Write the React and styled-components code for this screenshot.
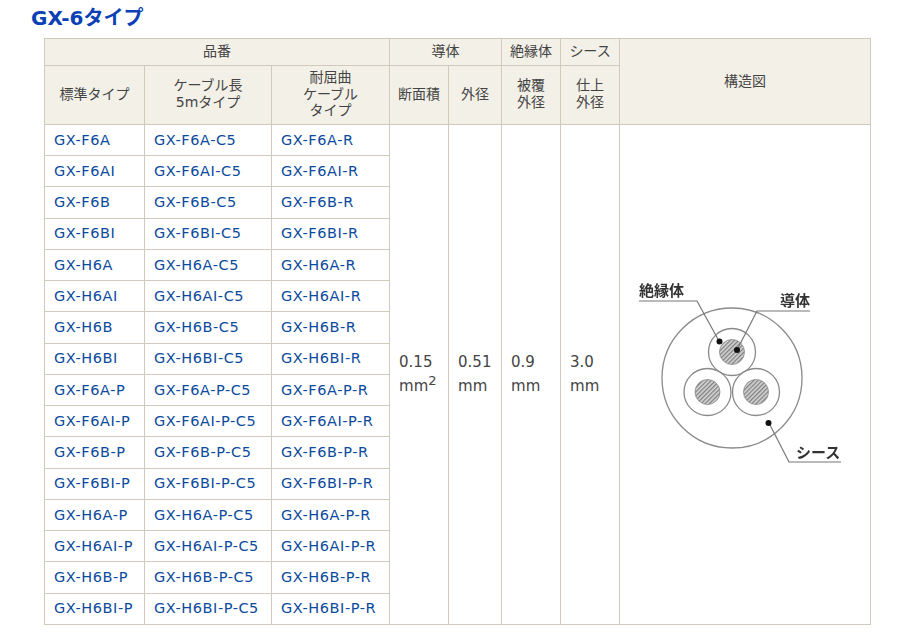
import React from "react";
import styled, { createGlobalStyle } from "styled-components";

const GlobalStyle = createGlobalStyle`
  html, body {
    margin: 0;
    padding: 0;
    background: #fff;
  }
`;

const FONT = `"DejaVu Sans", "Noto Sans CJK JP", sans-serif`;

const Page = styled.div`
  width: 900px;
  height: 638px;
  overflow: hidden;
  font-family: ${FONT};
  color: #444;
`;

const Title = styled.h2`
  margin: 0;
  padding: 5px 0 0 31px;
  height: 37.9px;
  box-sizing: border-box;
  font-size: 20px;
  line-height: 27px;
  font-weight: 700;
  color: #0a3fb5;
`;

const SpecTable = styled.table`
  margin-left: 44px;
  width: 826px;
  table-layout: fixed;
  border-collapse: collapse;
  font-size: 15px;
  border: 1px solid #cfcabb;
`;

const Head = styled.th`
  padding: 0 0 2px;
  border: 1px solid #cfcabb;
  background: #f3f0e8;
  font-weight: 400;
  font-size: 14px;
  line-height: 16.5px;
  color: #444;
  text-align: center;
  vertical-align: middle;
  height: ${(p) => p.$h || 24}px;
`;

const DiagramHead = styled(Head)`
  vertical-align: top;
  padding: 34px 0 0;
`;

const Cell = styled.td`
  padding: 0 0 1px 9px;
  border: 1px solid #cfcabb;
  height: 29.25px;
  line-height: 20px;
  letter-spacing: 0.55px;
  font-size: 14.5px;
  color: #0b4a9c;
  white-space: nowrap;
`;

const SpecCell = styled.td`
  padding: 0 0 0 9px;
  border: 1px solid #cfcabb;
  line-height: 24.5px;
  font-size: 15px;
  color: #444;
  vertical-align: middle;
`;

const DiagramCell = styled.td`
  padding: 0;
  border: 1px solid #cfcabb;
  text-align: center;
  vertical-align: middle;
`;

const Sup = styled.sup`
  font-size: 13px;
  line-height: 1;
`;

const Drawing = styled.svg`
  display: block;
  filter: blur(0.45px);
`;

const names = [
  "GX-F6A", "GX-F6AI", "GX-F6B", "GX-F6BI",
  "GX-H6A", "GX-H6AI", "GX-H6B", "GX-H6BI",
  "GX-F6A-P", "GX-F6AI-P", "GX-F6B-P", "GX-F6BI-P",
  "GX-H6A-P", "GX-H6AI-P", "GX-H6B-P", "GX-H6BI-P",
];

const Wire = ({ x, y }) => (
  <g>
    <circle cx={x} cy={y} r="23.5" fill="#fff" stroke="#8a8a8a" strokeWidth="1.3" />
    <circle cx={x} cy={y} r="12.5" fill="url(#hatch)" stroke="#8a8a8a" strokeWidth="0.8" />
  </g>
);

const CableDiagram = () => (
  <Drawing width="251" height="220" viewBox="0 0 251 220">
    <defs>
      <pattern id="hatch" width="3" height="3" patternUnits="userSpaceOnUse" patternTransform="rotate(-45)">
        <rect width="3" height="3" fill="#d6d6d6" />
        <rect width="3" height="1.3" fill="#7f7f7f" />
      </pattern>
    </defs>
    <g transform="translate(0,-264)" fill="none">
      <circle cx="112" cy="378" r="70" stroke="#8a8a8a" strokeWidth="1.3" />
      <Wire x={112} y={352} />
      <Wire x={87.5} y={392} />
      <Wire x={136} y={392} />
      <path d="M19 301H77L99 341" stroke="#777" strokeWidth="1.2" />
      <path d="M190 311H137L117 350" stroke="#777" strokeWidth="1.2" />
      <path d="M149 423L169 462H221" stroke="#777" strokeWidth="1.2" />
      <circle cx="99.5" cy="341.5" r="3" fill="#111" />
      <circle cx="117" cy="350" r="3" fill="#111" />
      <circle cx="148.5" cy="423" r="3" fill="#111" />
      <g fill="#333" fontSize="15" fontWeight="700" fontFamily='"Noto Sans CJK JP", sans-serif'>
        <text x="19" y="296">絶縁体</text>
        <text x="160" y="306">導体</text>
        <text x="176" y="458">シース</text>
      </g>
    </g>
  </Drawing>
);

export default function App() {
  return (
    <Page>
      <GlobalStyle />
      <Title>GX-6タイプ</Title>
      <SpecTable>
        <colgroup>
          <col style={{ width: 100 }} />
          <col style={{ width: 127 }} />
          <col style={{ width: 118 }} />
          <col style={{ width: 59 }} />
          <col style={{ width: 53 }} />
          <col style={{ width: 59 }} />
          <col style={{ width: 59 }} />
          <col style={{ width: 251 }} />
        </colgroup>
        <thead>
          <tr>
            <Head colSpan={3}>品番</Head>
            <Head colSpan={2}>導体</Head>
            <Head>絶縁体</Head>
            <Head>シース</Head>
            <DiagramHead rowSpan={2}>構造図</DiagramHead>
          </tr>
          <tr>
            <Head $h={56}>標準タイプ</Head>
            <Head $h={56}>ケーブル長<br />5mタイプ</Head>
            <Head $h={56}>耐屈曲<br />ケーブル<br />タイプ</Head>
            <Head $h={56}>断面積</Head>
            <Head $h={56}>外径</Head>
            <Head $h={56}>被覆<br />外径</Head>
            <Head $h={56}>仕上<br />外径</Head>
          </tr>
        </thead>
        <tbody>
          {names.map((n, i) => (
            <tr key={n}>
              <Cell>{n}</Cell>
              <Cell>{n}-C5</Cell>
              <Cell>{n}-R</Cell>
              {i === 0 && (
                <>
                  <SpecCell rowSpan={16}>0.15<br />mm<Sup>2</Sup></SpecCell>
                  <SpecCell rowSpan={16}>0.51<br />mm</SpecCell>
                  <SpecCell rowSpan={16}>0.9<br />mm</SpecCell>
                  <SpecCell rowSpan={16}>3.0<br />mm</SpecCell>
                  <DiagramCell rowSpan={16}><CableDiagram /></DiagramCell>
                </>
              )}
            </tr>
          ))}
        </tbody>
      </SpecTable>
    </Page>
  );
}
